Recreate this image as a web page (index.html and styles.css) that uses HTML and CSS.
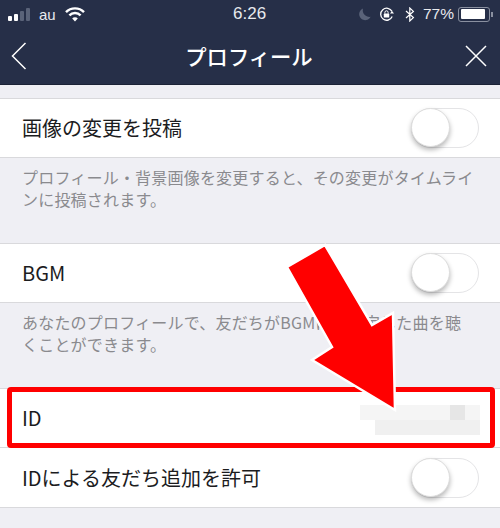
FILE: index.html
```html
<!DOCTYPE html>
<html lang="ja">
<head>
<meta charset="utf-8">
<title>プロフィール</title>
<link rel="stylesheet" href="styles.css">
</head>
<body>
<div class="screen">
  <header class="header">
    <div class="status">
      <div class="status-left">
        <span class="signal"><i class="on b1"></i><i class="on b2"></i><i class="b3"></i><i class="b4"></i></span>
        <span class="carrier">au</span>
        <svg class="wifi" width="20" height="15" viewBox="0 0 20 15"><path d="M1 5.2a12.6 12.6 0 0 1 18 0" fill="none" stroke="#fff" stroke-width="2.4"/><path d="M4.4 8.4a7.8 7.8 0 0 1 11.2 0" fill="none" stroke="#fff" stroke-width="2.4"/><path d="M7.2 11.4a3.8 3.8 0 0 1 5.6 0L10 14.4z" fill="#fff"/></svg>
      </div>
      <span class="clock">6:26</span>
      <div class="status-right">
        <svg class="moon" width="13" height="13" viewBox="0 0 13 13"><path d="M5 .6a6 6 0 1 0 7.6 8.2A6.6 6.6 0 0 1 5 .6z" fill="#5a6379"/></svg>
        <svg class="lock" width="17" height="15" viewBox="0 0 17 15"><path d="M13.2 9.6A6 6 0 1 1 13 4.4" fill="none" stroke="#fff" stroke-width="1.3"/><path d="M11 4.6h4l-2 2.6z" transform="rotate(180 13 5.6)" fill="#fff"/><rect x="4.8" y="6.6" width="5.4" height="4" rx=".6" fill="#fff"/><path d="M5.9 6.6V5.4a1.6 1.6 0 0 1 3.2 0v1.2" fill="none" stroke="#fff" stroke-width="1"/></svg>
        <svg class="bt" width="10" height="15" viewBox="0 0 10 15"><path d="M1 4l7.4 6.6L4.8 14V1l3.6 3.4L1 11" fill="none" stroke="#fff" stroke-width="1.2"/></svg>
        <span class="pct">77%</span>
        <span class="battery"><i></i></span><span class="nub"></span>
      </div>
    </div>
    <div class="nav">
      <svg class="nav-icon" width="16" height="28" viewBox="0 0 16 28"><path d="M14.5 1L1.5 14l13 13" fill="none" stroke="#fff" stroke-width="1.5"/></svg>
      <h1 class="title">プロフィール</h1>
      <svg class="nav-icon nav-close" width="22" height="22" viewBox="0 0 22 22"><path d="M1 1l20 20M21 1L1 21" fill="none" stroke="#fff" stroke-width="1.5"/></svg>
    </div>
  </header>
  <main class="content">
    <section class="row">
      <span class="label">画像の変更を投稿</span>
      <span class="toggle"><i></i></span>
    </section>
    <p class="note">プロフィール・背景画像を変更すると、その変更がタイムラインに投稿されます。</p>
    <section class="row">
      <span class="label">BGM</span>
      <span class="toggle"><i></i></span>
    </section>
    <p class="note">あなたのプロフィールで、友だちがBGMに　設定した曲を聴<br>くことができます。</p>
    <section class="row">
      <span class="label">ID</span>
      <span class="blur"><i class="blur-top"></i><i class="blur-bottom"></i><i class="blur-dark"></i></span>
    </section>
    <section class="row last">
      <span class="label">IDによる友だち追加を許可</span>
      <span class="toggle"><i></i></span>
    </section>
  </main>
  <div class="highlight"></div>
  <svg class="arrow" width="120" height="175" viewBox="0 0 120 175"><polygon points="7,27 45,5 92,85 113,73 115,170 32,120 52,107" fill="#f00" stroke="#fff" stroke-width="2.5"/></svg>
</div>
</body>
</html>
```

FILE: styles.css
```css
* { box-sizing: border-box; }
html, body { margin: 0; padding: 0; }
body { background: #efeff4; font-family: "Noto Sans CJK JP", "Liberation Sans", sans-serif; }
.screen { position: relative; width: 500px; height: 528px; overflow: hidden; background: #efeff4; }

.header { height: 85px; background: #262f48; color: #fff; display: flex; flex-direction: column; border-bottom: 1px solid #1b2236; }
.status { height: 28px; padding: 0 7px 0 8px; display: flex; align-items: center; justify-content: space-between; position: relative; font-family: "Liberation Sans", sans-serif; font-size: 15px; color: #e8eaee; }
.status-left, .status-right { display: flex; align-items: center; }
.signal { display: flex; align-items: flex-end; gap: 2px; height: 14px; margin-right: 9px; }
.signal i { display: block; width: 4px; background: #5a6379; border-radius: 1px; }
.signal .on { background: #fff; }
.b1 { height: 5px; } .b2 { height: 7px; } .b3 { height: 10px; } .b4 { height: 13px; }
.carrier { margin-right: 9px; }
.clock { position: absolute; left: 233px; font-size: 17px; }
.moon { margin-right: 8px; }
.lock { margin-right: 9px; }
.bt { margin-right: 8px; }
.pct { font-size: 15.5px; margin-right: 4px; }
.battery { width: 32px; height: 15px; border: 1px solid #8a90a0; border-radius: 3px; padding: 1.5px; display: flex; }
.battery i { display: block; width: 24px; background: #fff; border-radius: 1px; }
.nub { width: 2px; height: 5px; background: #8a90a0; margin-left: 1px; }

.nav { flex: 1; display: grid; grid-template-columns: 1fr auto 1fr; align-items: center; padding: 0 13px 0 11px; }
.title { margin: 0; font-size: 21.3px; font-weight: 500; line-height: 1; color: #fff; }
.nav-icon { display: block; }
.nav-close { justify-self: end; }

.content { padding-top: 13px; }
.row { height: 60px; background: #fff; border-top: 1px solid #d9d9dc; border-bottom: 1px solid #d9d9dc; display: flex; align-items: center; justify-content: space-between; padding: 0 21px 0 22px; }
.label { font-size: 20px; line-height: 26px; color: #1c1c1e; }
.toggle { width: 68px; height: 40px; border: 1.5px solid #e4e4e6; border-radius: 20px; background: #fff; display: block; position: relative; }
.toggle i { position: absolute; left: -1px; top: -1px; width: 39px; height: 39px; border-radius: 50%; background: #fff; border: 1px solid #ddd; box-shadow: 0 3px 5px rgba(0,0,0,.28); }

.note { margin: 0; height: 85px; padding: 8px 22px 0; font-size: 16px; letter-spacing: .2px; line-height: 22px; color: #8a8a8e; }

.last { border-top: 0; }
.blur { width: 120px; height: 30px; position: relative; display: block; margin: 4px -1px 0 0; }
.blur i { position: absolute; display: block; }
.blur-top { left: 0; top: 0; width: 120px; height: 15px; background: #f5f5f5; }
.blur-bottom { left: 15px; top: 15px; width: 105px; height: 15px; background: #f0f0f0; }
.blur-dark { left: 90px; top: 0; width: 15px; height: 15px; background: #e6e6e6; }

.highlight { position: absolute; left: 7px; top: 387px; width: 488px; height: 61px; border: 5px solid #f00; border-radius: 4px; }
.arrow { position: absolute; left: 280px; top: 240px; }
```
